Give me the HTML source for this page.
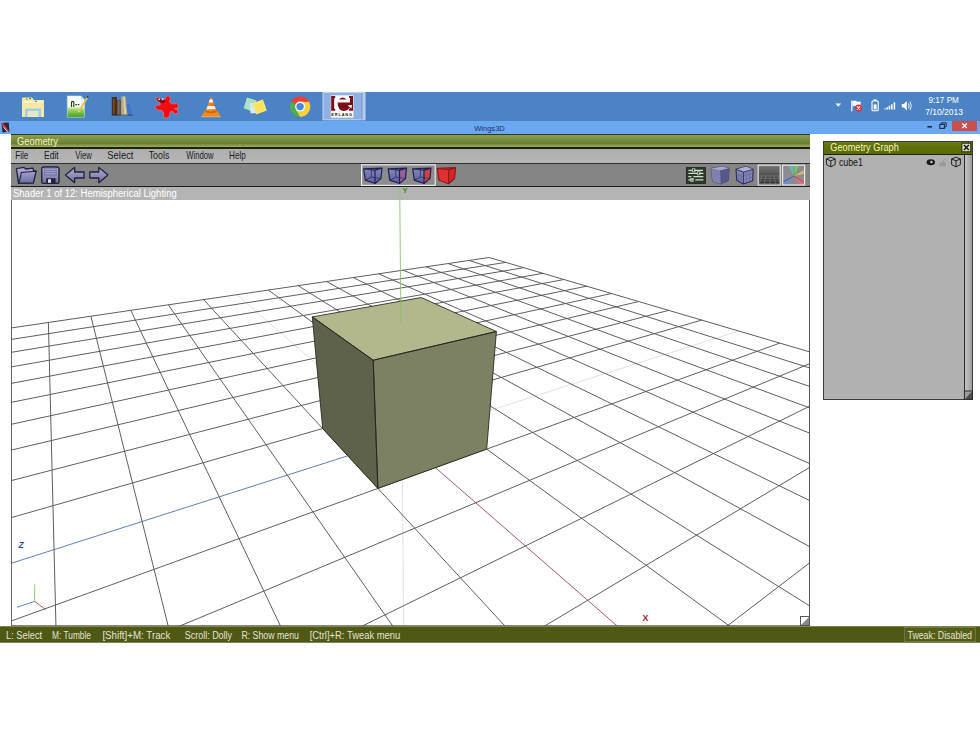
<!DOCTYPE html>
<html><head><meta charset="utf-8"><title>Wings3D</title>
<style>
*{box-sizing:border-box;margin:0;padding:0}
html,body{width:980px;height:735px;background:#fff;overflow:hidden}
body{position:relative;font-family:"Liberation Sans",sans-serif;}
.a{position:absolute}
#taskbar{left:0;top:92px;width:980px;height:29px;background:#4b83c5}
#titlebar{left:0;top:121px;width:980px;height:13px;background:#6ba8ef}
#titlebar .t{left:0;width:980px;top:1px;text-align:center;font-size:8px;line-height:11px;color:#1a2a40}
#closeb{left:952px;top:121px;width:25px;height:10px;background:#c9504f}
#geo{left:11px;top:134px;width:799px;height:492px;background:#fff}
#geotitle{left:0;top:0;width:799px;height:14.5px;background:linear-gradient(#2e3a10 0,#2e3a10 0.8px,#8a9c58 1.2px,#7b9040 5px,#6a8030 9.5px,#94a25c 12px,#98a460 12.6px,#1e2408 13px,#1e2408 14.5px);}
#geotitle span{left:6px;top:1px;font-size:10px;line-height:12px;color:#f4f3b8;letter-spacing:-0.2px}
#menubar{left:0;top:14.5px;width:799px;height:14.5px;background:linear-gradient(#aeaeb0,#b6b6b6);font-size:10px;color:#1c1c1c}
#menubar span{top:1px;line-height:13px;letter-spacing:-0.3px}
#toolbar{left:0;top:29px;width:799px;height:24px;background:#858585;border-top:1.2px solid #303030;border-bottom:1.6px solid #1c1c1c}
#shader{z-index:2;left:0;top:53px;width:799px;height:12.5px;background:#b4b4b4;color:#fff;font-size:10px;line-height:12px;}
#shader span{left:2px;top:0;letter-spacing:-0.25px;white-space:nowrap}
#vp{left:0;top:65px;width:799px;height:427px;overflow:hidden;background:#fff}
#status{left:0;top:626px;width:980px;height:17px;background:#4f5814;border-top:1px solid #7e8650;border-bottom:1px solid #7e8650;color:#e6e6d8;font-size:10px}
#status span{top:2px;line-height:12px;white-space:nowrap;letter-spacing:-0.2px}
#gg{left:823px;top:141px;width:150px;height:259px;background:#b1b1b1;border:1px solid #3c3c3c}
#ggtitle{left:0;top:0;width:148px;height:13px;background:linear-gradient(#6c7c14,#5f6f08 40%,#5a6a06);border-bottom:1.2px solid #1e2404}
#ggtitle span{left:6px;top:0;font-size:10px;line-height:13px;color:#f4f3b8;letter-spacing:0px;white-space:nowrap}
</style></head><body>
<div id="taskbar" class="a">
<svg class="a" style="left:0;top:0" width="980" height="29" viewBox="0 92 980 29">
<defs>
<linearGradient id="gnpp" x1="0" y1="0" x2="0" y2="1"><stop offset="0" stop-color="#fff"/><stop offset="0.5" stop-color="#f4f8ec"/><stop offset="0.62" stop-color="#a8dc6c"/><stop offset="1" stop-color="#3a9a22"/></linearGradient>
<linearGradient id="gfold" x1="0" y1="0" x2="0" y2="1"><stop offset="0" stop-color="#f8e9a6"/><stop offset="1" stop-color="#f3dc88"/></linearGradient>
<linearGradient id="gvlc" x1="0" y1="0" x2="1" y2="0"><stop offset="0" stop-color="#f9a23a"/><stop offset="0.5" stop-color="#f07c10"/><stop offset="1" stop-color="#d86208"/></linearGradient>
</defs>
<g>
<path d="M22 98.5 L22 116.5 L44 116.5 L44 100 L34 100 L32 97.5 L23 97.5 Z" fill="url(#gfold)"/>
<path d="M23.5 101 L42.5 101 L42.5 103 L23.5 103Z" fill="#fdf6d0"/>
<path d="M22 104.5 L44 104.5 L44 117 L22 117Z" fill="#f7e8a4"/>
<path d="M25 108.5 L41 108.5 L41 117 L38.5 117 L38.5 111 L27.5 111 L27.5 117 L25 117Z" fill="#9fcdee"/>
<path d="M28.5 112.5 L37.5 112.5 L37.5 114.5 L28.5 114.5Z" fill="#cfe6f6"/>
<path d="M26 99 l1.5 0 M29 98.6 l2 0 M35 101.3 l2 0" stroke="#6b6a5a" stroke-width="1"/>
</g>
<g>
<path d="M67.3 96 L81 96 L84.5 99.5 L84.5 117.3 L67.3 117.3Z" fill="url(#gnpp)" stroke="#cfe0d0" stroke-width="0.6"/>
<path d="M81 96 L81 99.5 L84.5 99.5Z" fill="#d0d8e0"/>
<path d="M71.5 107 L71.5 102.2 Q72.6 100.6 73.8 102.2 L73.8 107" fill="none" stroke="#263a1c" stroke-width="1.1"/>
<path d="M75.3 104.6 h1.6 M77.7 104.6 h1.6" stroke="#263a1c" stroke-width="1.4"/>
<path d="M78.5 110.5 L86.6 97.2 L88 98.2 L80 111.3 Z" fill="#e8c24a"/>
<path d="M86.6 97.2 L87.4 95.8 L88.6 96.8 L88 98.2Z" fill="#3a3a50"/>
<path d="M78.5 110.5 L78 112.6 L80 111.3Z" fill="#f4e2b0"/>
</g>
<g>
<rect x="111.8" y="97" width="5.2" height="18.4" fill="#4a2f1e"/>
<rect x="113" y="99" width="1.6" height="14.5" fill="#7a4a26"/>
<rect x="117" y="99.8" width="4.2" height="15.6" fill="#5c5448"/>
<rect x="118" y="101" width="1.4" height="13" fill="#80705a"/>
<path d="M121.2 96.4 L125.5 96 L127.9 115.4 L121.2 115.4Z" fill="#b8aa86"/>
<path d="M123 97 L124.6 96.9 L126.4 114.6 L124.4 114.6Z" fill="#d8d0b0"/>
<path d="M126.3 104.2 L129.6 103.8 L132.6 115.4 L127.8 115.4Z" fill="#3f74c8"/>
<path d="M111.8 114.6 h20.8 v1 h-20.8z" fill="#2a2a30" opacity="0.55"/>
</g>
<g>
<path d="M155.6 97.2 L159.5 98 L162.5 100.5 L165 99.5 L166.5 96 L169.5 96 L170.5 99 L169.5 102 L172 104 L176.5 103.5 L178.6 105.5 L177.6 108 L174.5 108.6 L177.8 110 L178 113.4 L174.8 113.8 L172 111 L170 112.5 L169.5 116 L166.5 118.4 L163.6 117 L163.8 113 L162 110.5 L158 110 L154.8 107.6 L156.5 105.4 L160.2 105 L160 102.6 L157 100.6 Z" fill="#f20d12" stroke="#f06a78" stroke-width="0.8" stroke-linejoin="round"/>
<path d="M157 98 L160 98.4 L162.5 100.5 L164.6 99.8 L165.6 102 L163 103.2 L160.4 102.6 L157.6 100.6Z" fill="#7a1018"/>
<circle cx="159.2" cy="99.4" r="0.8" fill="#fff"/><circle cx="162.6" cy="99" r="0.8" fill="#fff"/>
</g>
<g>
<path d="M211.1 96 L216.8 112 L205.4 112 Z" fill="url(#gvlc)"/>
<path d="M209.9 99.2 L212.3 99.2 L213.4 102.4 L208.8 102.4Z" fill="#fbfbfb"/>
<path d="M207.5 106 L214.7 106 L215.8 109.2 L206.4 109.2Z" fill="#f4f0ec"/>
<path d="M205 110.5 L217.2 110.5 L220.6 116.4 L201.4 116.4 Z" fill="#f28a18"/>
<path d="M205.4 112 Q211.1 114.6 216.8 112 L216.2 110.4 Q211.1 112.6 206 110.4Z" fill="#d8640a"/>
<path d="M201.4 116.4 h19.2 v0.8 h-19.2z" fill="#fbc068"/>
</g>
<g>
<path d="M247 97.6 L256.4 100.4 L252 111.6 L243.6 108.2Z" fill="#a9e2c4"/>
<path d="M249.6 103.2 L258 103 L258.4 113 L250.6 113.4Z" fill="#d4e8f4"/>
<path d="M252.6 103 L263 99.6 L266.8 110.4 L256.2 114.6Z" fill="#f7e672"/>
<path d="M255 105 L262 102.5 L264.5 109.5 L257.4 112.2Z" fill="#f9e04c" opacity="0.7"/>
</g>
<g>
<circle cx="300.1" cy="106.6" r="10.2" fill="#e8403a"/>
<path d="M300.1 106.6 L291.27 101.5 A10.2 10.2 0 0 0 300.1 116.8 L304.6 109.2Z" fill="#4cae4f"/>
<path d="M300.1 106.6 L310.3 106.6 A10.2 10.2 0 0 1 300.1 116.8 L295.7 109.2 Z" fill="#f7d23c"/>
<path d="M300.1 101.5 L308.93 101.5 A10.2 10.2 0 0 1 300.1 116.8 L304.5 109.2 Z" fill="#f7d23c"/>
<path d="M300.1 96.4 A10.2 10.2 0 0 1 308.93 101.5 L300.1 101.5Z" fill="#e8403a"/>
<path d="M291.27 101.5 A10.2 10.2 0 0 1 308.93 101.5 L300.1 101.5 Z" fill="#e8403a"/>
<circle cx="300.1" cy="106.6" r="5" fill="#f4f6f8"/>
<circle cx="300.1" cy="106.6" r="3.7" fill="#4a86d6"/>
</g>
<g>
<rect x="323" y="92.6" width="42" height="27.2" fill="#8fb1e2" stroke="#c2d8f4" stroke-width="1"/>
<rect x="362.2" y="93" width="2.6" height="26.4" fill="#b4ccee"/>
<path d="M362 93 v26.4" stroke="#6f96d2" stroke-width="0.8"/>
<rect x="330.8" y="95.4" width="22.6" height="22.2" fill="#fff"/>
<path d="M331.2 96 h4 v2 h-1 v10.8 h1 v2 h-4z" fill="#7a0c14"/>
<path d="M353 96 h-4 v2 h1 v10.8 h-1 v2 h4z" fill="#7a0c14"/>
<path d="M339 99.6 Q342.6 95.6 346.4 99.6 Z" fill="#7a0c14"/>
<path d="M337.6 102.4 L352 102.4 L352 104.6 Q348.8 111.4 343.4 111 Q338 110.4 337.6 102.4Z" fill="#7a0c14"/>
<path d="M347.5 105.5 L352 105 L351.5 108.5Z" fill="#fff"/>
<text x="342.1" y="116.2" font-size="3.9" font-weight="bold" text-anchor="middle" fill="#111" letter-spacing="0.9" font-family="Liberation Sans, sans-serif">ERLANG</text>
</g>
<g>
<path d="M835.4 103.4 L841.2 103.4 L838.3 106.8Z" fill="#fff"/>
<path d="M851.8 100.6 v10.6" stroke="#fff" stroke-width="1.2"/>
<path d="M852.4 101.2 Q854.6 100 856.6 101.2 Q858.6 102.4 860.6 101.2 L860.6 106.4 Q858.6 107.6 856.6 106.4 Q854.6 105.2 852.4 106.4Z" fill="#fff"/>
<circle cx="858.6" cy="108" r="3.4" fill="#d8303a"/>
<path d="M857 106.4 l3.2 3.2 M860.2 106.4 l-3.2 3.2" stroke="#fff" stroke-width="1.1"/>
<rect x="872" y="101" width="6.2" height="9.8" rx="1" fill="none" stroke="#fff" stroke-width="1.1"/>
<rect x="873.6" y="99.4" width="3" height="1.6" fill="#fff"/>
<rect x="873.6" y="104.4" width="3" height="5" fill="#fff"/>
<path d="M885 109.4 v-1 M887.2 109.4 v-2.2 M889.4 109.4 v-3.6 M891.8 109.4 v-5.2 M894.4 109.4 v-7.2" stroke="#fff" stroke-width="1.5"/>
<path d="M901.8 104 h2 l3 -3 v9.6 l-3 -3 h-2z" fill="#fff"/>
<path d="M908.4 103.2 Q910 105.8 908.4 108.4" stroke="#fff" stroke-width="0.9" fill="none"/>
<path d="M910 101.6 Q912.6 105.8 910 110" stroke="#fff" stroke-width="0.9" fill="none"/>
</g>
</svg>
</div>
<div id="titlebar" class="a"></div>
<div id="closeb" class="a"></div>
<svg class="a" style="left:0;top:121px" width="980" height="13" viewBox="0 121 980 13">
<g>
<path d="M1.6 123 L8.8 122.4 L9.4 131.6 L2.4 132.6Z" fill="#2a2a38"/>
<path d="M2 123.4 L8 131" stroke="#d83038" stroke-width="2"/>
<path d="M3.2 126.6 L7.6 132" stroke="#f0f0f0" stroke-width="0.9"/>
</g>
<path d="M927.4 126.8 h4.6" stroke="#1c2c48" stroke-width="1.6"/>
<rect x="939.8" y="124.4" width="4.6" height="4" fill="none" stroke="#1c2c48" stroke-width="1.1"/><path d="M941.4 124 v-1.2 h4.8 v4 h-1.6" fill="none" stroke="#1c2c48" stroke-width="1"/>
<path d="M962.4 123.6 l4.4 4.4 M966.8 123.6 l-4.4 4.4" stroke="#fff" stroke-width="1.4"/>
</svg>
<div id="geo" class="a">
 <div id="geotitle" class="a"></div>
 <div id="menubar" class="a">
 </div>
 <div id="toolbar" class="a">
 <svg class="a" style="left:0;top:-1.5px" width="799" height="24" viewBox="11 163 799 24">
<defs>
<linearGradient id="gic" x1="0" y1="0" x2="0" y2="1"><stop offset="0" stop-color="#b4b4dc"/><stop offset="1" stop-color="#6c6c9c"/></linearGradient>
<linearGradient id="gcb" x1="0" y1="0" x2="0" y2="1"><stop offset="0" stop-color="#8888bc"/><stop offset="1" stop-color="#5c5c98"/></linearGradient>
<linearGradient id="ggrid" x1="0" y1="0" x2="0" y2="1"><stop offset="0" stop-color="#7a7a7a"/><stop offset="0.5" stop-color="#505050"/><stop offset="1" stop-color="#2c2c2c"/></linearGradient>
</defs>
<path d="M16.4 168.6 L24 167.4 L25.6 169 L33 168.2 L33.6 171 L36.2 171 L33.4 183 L18.6 183.4 Z" fill="url(#gic)" stroke="#22223c" stroke-width="1.3" stroke-linejoin="round"/>
<path d="M19 183 L21.4 172.4 L36 171.2" fill="none" stroke="#22223c" stroke-width="1.1"/>
<rect x="41.8" y="167" width="17.2" height="16.4" rx="2" fill="url(#gic)" stroke="#22223c" stroke-width="1.4"/>
<path d="M44.6 168 h11.6 v7 h-11.6z" fill="#9c9cc8" stroke="#5c5c8c" stroke-width="0.6"/><path d="M45 170.4 h10.8 M45 172.6 h10.8" stroke="#6c6c98" stroke-width="0.7"/>
<rect x="46.2" y="178.2" width="9.4" height="5" fill="#22223c"/><rect x="48" y="179.2" width="3" height="3.6" fill="#d8d8ec"/>
<path d="M65.4 175 L74.6 167.4 L74.6 172 L84 172 L84 178 L74.6 178 L74.6 182.8 Z" fill="url(#gic)" stroke="#22223c" stroke-width="1.3" stroke-linejoin="round"/>
<path d="M108 175 L98.8 167.4 L98.8 172 L89.8 172 L89.8 178 L98.8 178 L98.8 182.8 Z" fill="url(#gic)" stroke="#22223c" stroke-width="1.3" stroke-linejoin="round"/>
<rect x="361.6" y="164.8" width="73.6" height="20.6" fill="#8c8c8c" stroke="#e8e8e8" stroke-width="1.2"/>
<g stroke-linejoin="round"><path d="M363.7 168.9 L382.0 168.1 L380.9 178.6 L375.0 183.5 L365.3 180.1 Z" fill="url(#gcb)"/><path d="M371.4 168.1 L371.4 177.0 L365.3 180.1 M371.4 177.0 L380.9 178.6" fill="none" stroke="#1e1e58" stroke-width="0.8" opacity="0.8"/><path d="M363.7 168.9 L382.0 168.1 L380.9 178.6 L375.0 183.5 L365.3 180.1 Z M375.0 170.1 L375.0 183.5 M363.7 168.9 L375.0 170.1 L382.0 168.1" fill="none" stroke="#1e1e58" stroke-width="1.15"/></g>
<g stroke-linejoin="round"><path d="M388.2 168.9 L406.5 168.1 L405.4 178.6 L399.5 183.5 L389.8 180.1 Z" fill="url(#gcb)"/><path d="M399.5 170.1 L406.5 168.1 L405.4 178.6 L399.5 183.5 Z" fill="#94609c"/><path d="M395.9 168.1 L395.9 177.0 L389.8 180.1 M395.9 177.0 L405.4 178.6" fill="none" stroke="#1e1e58" stroke-width="0.8" opacity="0.8"/><path d="M388.2 168.9 L406.5 168.1 L405.4 178.6 L399.5 183.5 L389.8 180.1 Z M399.5 170.1 L399.5 183.5 M388.2 168.9 L399.5 170.1 L406.5 168.1" fill="none" stroke="#1e1e58" stroke-width="1.15"/></g>
<g stroke-linejoin="round"><path d="M412.7 168.9 L431.0 168.1 L429.9 178.6 L424.0 183.5 L414.3 180.1 Z" fill="url(#gcb)"/><path d="M424.0 170.1 L431.0 168.1 L429.9 178.6 L424.0 183.5 Z" fill="#c8443c"/><path d="M420.4 168.1 L420.4 177.0 L414.3 180.1 M420.4 177.0 L429.9 178.6" fill="none" stroke="#1e1e58" stroke-width="0.8" opacity="0.8"/><path d="M412.7 168.9 L431.0 168.1 L429.9 178.6 L424.0 183.5 L414.3 180.1 Z M424.0 170.1 L424.0 183.5 M412.7 168.9 L424.0 170.1 L431.0 168.1" fill="none" stroke="#1e1e58" stroke-width="1.15"/></g>
<g stroke-linejoin="round"><path d="M437.2 168.4 L455.6 167.6 L454.5 178.6 L448.6 183.8 L438.9 180.2 Z" fill="#e03030"/><path d="M448.6 169.7 L455.6 167.6 L454.5 178.6 L448.6 183.8 Z" fill="#d02828"/><path d="M437.2 168.4 L455.6 167.6 L448.6 169.7 Z" fill="#e83c3c"/><path d="M437.2 168.4 L455.6 167.6 L454.5 178.6 L448.6 183.8 L438.9 180.2 Z M448.6 169.7 L448.6 183.8 M437.2 168.4 L448.6 169.7 L455.6 167.6" fill="none" stroke="#8c1818" stroke-width="1.15"/></g>
<rect x="686.4" y="167.6" width="19" height="15.8" fill="#2c3a2c" stroke="#1a241a" stroke-width="0.8"/>
<path d="M688.4 170.4 h4 M694 170.4 h9 M688.4 173.4 h9 M699 173.4 h4.4 M688.4 176.6 h3 M693.4 176.6 h10 M688.4 179.8 h5 M695.4 179.8 h8" stroke="#d4dcd0" stroke-width="1.2"/>
<rect x="692.6" y="168.8" width="2.4" height="3" fill="none" stroke="#d4dcd0" stroke-width="0.7"/><rect x="697.6" y="171.8" width="2.4" height="3" fill="none" stroke="#d4dcd0" stroke-width="0.7"/><rect x="690.8" y="178.4" width="2.4" height="3" fill="none" stroke="#d4dcd0" stroke-width="0.7"/>
<path d="M711 168.4 L722 166.6 L729.2 168.2 L728.4 180.6 L720.6 184 L712.6 181.4Z" fill="#6c6c9c" stroke="#3c3c5c" stroke-width="0.8" stroke-linejoin="round"/>
<path d="M711 168.4 L722 166.6 L729.2 168.2 L720 170.4Z" fill="#a8a8d0"/><path d="M720 170.4 L729.2 168.2 L728.4 180.6 L720.6 184Z" fill="#585888"/><path d="M711 168.4 L720 170.4 L720.6 184 L712.6 181.4Z" fill="#8080b0"/>
<path d="M736 169.4 L746 166.6 L753.2 169.4 L752.6 180.8 L743.4 184 L736.8 180.6Z" fill="#8484b8" stroke="#2c2c54" stroke-width="1.1" stroke-linejoin="round"/>
<path d="M736 169.4 L746 166.6 L753.2 169.4 L743.6 172Z" fill="#b0b0dc"/><path d="M736 169.4 L743.6 172 L753.2 169.4 M743.6 172 L743.4 184" fill="none" stroke="#2c2c54" stroke-width="0.9"/>
<path d="M738.4 173 l0.4 9 M741 173.6 l0.2 9.6 M736.4 174.6 l7 2.4 M736.6 178 l7 2.4 M746.6 171.6 l0 11 M750 170.6 l-0.2 11 M743.6 176 l9.4 -3 M743.6 180 l9.2 -3.2" stroke="#5c5c94" stroke-width="0.5" fill="none"/>
<rect x="758.2" y="165.2" width="22" height="19.8" fill="url(#ggrid)" stroke="#e4e4e4" stroke-width="1.2"/>
<path d="M759 176 h20.4 M759 178.4 h20.4 M759 181 h20.4 M759 183.6 h20.4 M762 175 l-3 9 M766 175 l-1.6 9 M770 175 l0 9 M774 175 l1.6 9 M778 175 l2 9" stroke="#8a8a8a" stroke-width="0.5" fill="none"/>
<rect x="782.6" y="165.2" width="22" height="19.8" fill="#8c8c90" stroke="#e4e4e4" stroke-width="1.2"/>
<path d="M794 176 L794 166 L799 166Z" fill="#7ccc6c" opacity="0.8"/><path d="M794 176 L803.8 170 L803.8 174Z" fill="#e8c060" opacity="0.8"/><path d="M794 176 L803.8 180 L803.8 184 L799 184Z" fill="#e0707c" opacity="0.8"/><path d="M794 176 L783.4 180 L783.4 184 L788 184Z" fill="#6c8cd8" opacity="0.7"/><path d="M794 176 L788 166 L794 166Z" fill="#6cc0c8" opacity="0.7"/>
<path d="M794 176 L794 166" stroke="#50b040" stroke-width="0.9"/><path d="M794 176 L784 181.6" stroke="#3c5cc0" stroke-width="0.9"/><path d="M794 176 L803.6 182" stroke="#d03848" stroke-width="0.9"/>
 </svg>
 </div>
 <div id="shader" class="a"></div>
 <div id="vp" class="a">
 <svg class="a" style="left:0;top:0" width="799" height="427" viewBox="0 0 799 427">
<path d="M391.0 239.5L226.0 95.7M391.0 239.5L727.6 132.0M391.0 239.5L392.7 429.0" stroke="#d8d8d8" stroke-width="0.8" fill="none"/>
<path d="M478.2 58.5L-2.0 129.3M478.2 58.5L801.0 153.6M494.8 63.4L-2.0 140.8M458.1 61.5L801.0 169.7M512.7 68.7L-2.0 153.7M437.1 64.6L801.0 188.2M532.0 74.3L-2.0 168.3M415.1 67.8L801.0 209.7M552.9 80.5L-2.0 184.8M392.0 71.2L801.0 235.1M575.6 87.2L-2.0 203.8M367.7 74.8L801.0 265.6M600.5 94.5L-2.0 225.8M342.3 78.6L801.0 302.7M627.7 102.5L-2.0 251.6M315.5 82.5L801.0 349.0M657.6 111.4L-2.0 282.2M287.2 86.7L801.0 408.4M690.7 121.1L-2.0 319.3M257.4 91.1L721.2 429.0M768.8 144.1L-2.0 422.8M192.6 100.6L495.8 429.0M801.0 163.7L164.1 429.0M157.3 105.8L383.1 429.0M801.0 206.1L347.3 429.0M119.8 111.4L270.4 429.0M801.0 267.0L530.4 429.0M79.9 117.2L157.7 429.0M801.0 362.0L713.6 429.0M37.4 123.5L45.0 429.0" stroke="#555" stroke-width="0.95" fill="none"/>
<path d="M391.0 239.5L608.5 429.0" stroke="#9a3c50" stroke-width="0.85" fill="none"/>
<path d="M391.0 239.5L-2.0 365.0" stroke="#4468a8" stroke-width="0.85" fill="none"/>
<polygon points="301.3,117.9 410.3,98.5 485.4,132.5 362.2,161.2" fill="#b2b78e"/>
<polygon points="301.3,117.9 362.2,161.2 366.9,289.4 311.7,229.6" fill="#5f624b"/>
<polygon points="362.2,161.2 485.4,132.5 475.7,250.1 366.9,289.4" fill="#7d8164"/>
<g stroke="#23231a" stroke-width="0.85" fill="none" stroke-linejoin="round"><polygon points="301.3,117.9 410.3,98.5 485.4,132.5 362.2,161.2"/><polygon points="301.3,117.9 362.2,161.2 366.9,289.4 311.7,229.6"/><polygon points="362.2,161.2 485.4,132.5 475.7,250.1 366.9,289.4"/></g>
<path d="M389.9 125.0L388.5 -38.7" stroke="#86c066" stroke-width="0.85" fill="none"/>
<text x="7.6" y="349.3" font-size="8.6" font-weight="bold" font-style="italic" fill="#2c4c9a" font-family="Liberation Sans, sans-serif">Z</text>
<text x="631.6" y="422.4" font-size="8.8" font-weight="bold" fill="#a02030" font-family="Liberation Sans, sans-serif">X</text>
<g stroke-width="0.9" fill="none"><path d="M23.7 402.4L23.7 385.4" stroke="#7cc860"/><path d="M23.7 402.4L6 408.3" stroke="#4c7cd0"/><path d="M23.7 402.4L34.6 410.6" stroke="#c04050"/></g>
<g><rect x="789.5" y="417.5" width="9" height="9" fill="#fff" stroke="#555" stroke-width="1"/><path d="M798 418L798 426L790 426Z" fill="#888"/></g>
<path d="M0.4 0L0.4 427M798.5 0L798.5 427" stroke="#555" stroke-width="1" fill="none"/><path d="M0 426.6L799 426.6" stroke="#555" stroke-width="0.8"/>
 </svg>
 </div>
</div>
<div id="status" class="a">
 <div class="a" style="left:904px;top:0px;width:72px;height:15px;border:1px solid #6f7740;background:#555e18"></div>
</div>
<div id="gg" class="a">
 <div id="ggtitle" class="a"></div>
 <div class="a" style="left:140px;top:13px;width:8px;height:244px;background:linear-gradient(to right,#c4c4c4,#9c9c9c);border-left:1.3px solid #2a2a2a"></div>
 <svg class="a" style="left:-1px;top:-1px" width="150" height="259" viewBox="823 141 150 259">
<rect x="961.8" y="143.2" width="9" height="8.6" fill="#d4d8c0" stroke="#2c3208" stroke-width="1.1"/><path d="M964 145 l4.8 5 M968.8 145 l-4.8 5" stroke="#101010" stroke-width="1.3"/>
<path d="M826.4 159.0 l4.4 -1.8 l4.4 1.8 l0 5.6 l-4.4 2.2 l-4.4 -2.2 Z M826.4 159.0 l4.4 1.8 l4.4 -1.8 M830.8 160.8 l0 6" fill="none" stroke="#222" stroke-width="1" stroke-linejoin="round"/>
<path d="M951.6 159.0 l4.4 -1.8 l4.4 1.8 l0 5.6 l-4.4 2.2 l-4.4 -2.2 Z M951.6 159.0 l4.4 1.8 l4.4 -1.8 M956.0 160.8 l0 6" fill="none" stroke="#222" stroke-width="1" stroke-linejoin="round"/>
<ellipse cx="930.8" cy="162.2" rx="4.2" ry="3" fill="#1c1c1c"/><circle cx="931.4" cy="162" r="1.2" fill="#c8c8c8"/>
<rect x="939.4" y="162" width="6.4" height="4.4" fill="#9c9c9c"/><path d="M943.4 162 v-2 q1.6 -2.4 3.2 0 v1" fill="none" stroke="#9c9c9c" stroke-width="1"/>
<rect x="964.4" y="391" width="8" height="8.4" fill="#9c9c9c" stroke="#2a2a2a" stroke-width="1"/><path d="M972 391.6 L972 399 L965 399Z" fill="#4c4c4c"/>
 </svg>
</div>
<svg class="a" style="left:0;top:0;z-index:5" width="980" height="735" viewBox="0 0 980 735" font-family="Liberation Sans, sans-serif">
<path d="M399.8 199L399.7 187.6" stroke="#8cc470" stroke-width="0.9" opacity="0.6"/>
<text x="402.6" y="193.4" font-size="7.6" font-weight="bold" fill="#3f8a25">Y</text>
<text x="17.0" y="144.6" font-size="10" fill="#f4f3b8" textLength="41.0" lengthAdjust="spacingAndGlyphs">Geometry</text>
<text x="15.3" y="159.4" font-size="10.2" fill="#1c1c1c" textLength="13.1" lengthAdjust="spacingAndGlyphs">File</text>
<text x="44.0" y="159.4" font-size="10.2" fill="#1c1c1c" textLength="14.7" lengthAdjust="spacingAndGlyphs">Edit</text>
<text x="75.3" y="159.4" font-size="10.2" fill="#1c1c1c" textLength="16.5" lengthAdjust="spacingAndGlyphs">View</text>
<text x="107.3" y="159.4" font-size="10.2" fill="#1c1c1c" textLength="26.2" lengthAdjust="spacingAndGlyphs">Select</text>
<text x="148.7" y="159.4" font-size="10.2" fill="#1c1c1c" textLength="20.7" lengthAdjust="spacingAndGlyphs">Tools</text>
<text x="186.2" y="159.4" font-size="10.2" fill="#1c1c1c" textLength="27.3" lengthAdjust="spacingAndGlyphs">Window</text>
<text x="229.0" y="159.4" font-size="10.2" fill="#1c1c1c" textLength="16.8" lengthAdjust="spacingAndGlyphs">Help</text>
<text x="13.0" y="197.0" font-size="10" fill="#ffffff" textLength="163.7" lengthAdjust="spacingAndGlyphs">Shader 1 of 12: Hemispherical Lighting</text>
<text x="6.0" y="638.7" font-size="10" fill="#e4e4d0" textLength="36.2" lengthAdjust="spacingAndGlyphs">L: Select</text>
<text x="52.0" y="638.7" font-size="10" fill="#e4e4d0" textLength="39.0" lengthAdjust="spacingAndGlyphs">M: Tumble</text>
<text x="102.4" y="638.7" font-size="10" fill="#e4e4d0" textLength="67.9" lengthAdjust="spacingAndGlyphs">[Shift]+M: Track</text>
<text x="184.7" y="638.7" font-size="10" fill="#e4e4d0" textLength="47.4" lengthAdjust="spacingAndGlyphs">Scroll: Dolly</text>
<text x="241.4" y="638.7" font-size="10" fill="#e4e4d0" textLength="57.6" lengthAdjust="spacingAndGlyphs">R: Show menu</text>
<text x="309.7" y="638.7" font-size="10" fill="#e4e4d0" textLength="90.6" lengthAdjust="spacingAndGlyphs">[Ctrl]+R: Tweak menu</text>
<text x="907.5" y="638.7" font-size="10" fill="#e4e4d0" textLength="64.5" lengthAdjust="spacingAndGlyphs">Tweak: Disabled</text>
<text x="830.3" y="151.2" font-size="10" fill="#f4f3b8" textLength="68.5" lengthAdjust="spacingAndGlyphs">Geometry Graph</text>
<text x="838.9" y="165.9" font-size="10" fill="#141414" textLength="23.9" lengthAdjust="spacingAndGlyphs">cube1</text>
<text x="928.6" y="103.0" font-size="9.2" fill="#ffffff" textLength="30.2" lengthAdjust="spacingAndGlyphs">9:17 PM</text>
<text x="925.3" y="115.0" font-size="9.2" fill="#ffffff" textLength="37.6" lengthAdjust="spacingAndGlyphs">7/10/2013</text>
<text x="474.2" y="130.6" font-size="7.6" fill="#14326e" textLength="30.6" lengthAdjust="spacingAndGlyphs">Wings3D</text>
</svg>
</body></html>
